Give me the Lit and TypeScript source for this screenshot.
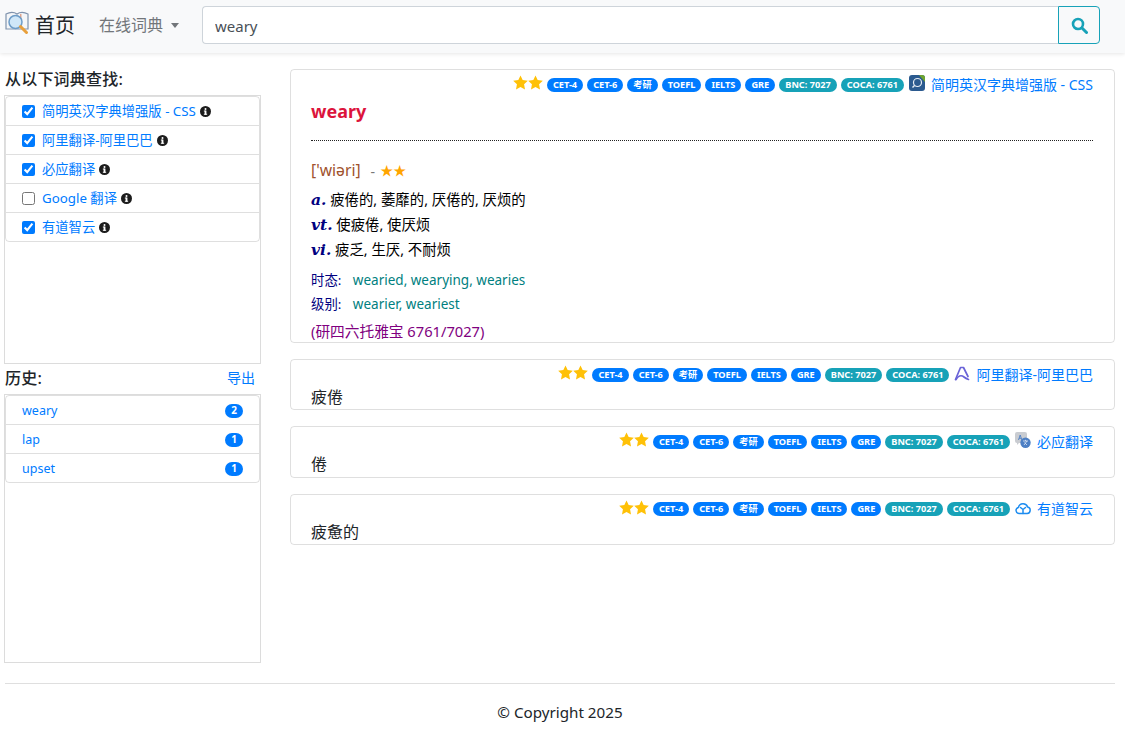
import { LitElement, html, css, svg } from "lit";
import { customElement } from "lit/decorators.js";

const TAGS = ["CET-4", "CET-6", "考研", "TOEFL", "IELTS", "GRE"];
const FREQ = ["BNC: 7027", "COCA: 6761"];

const DICTS = [
  { name: "简明英汉字典增强版 - CSS", checked: true },
  { name: "阿里翻译-阿里巴巴", checked: true },
  { name: "必应翻译", checked: true },
  { name: "Google 翻译", checked: false },
  { name: "有道智云", checked: true },
];

const HISTORY = [
  { word: "weary", count: 2 },
  { word: "lap", count: 1 },
  { word: "upset", count: 1 },
];

const star = svg`<path d="M8 .4l2.300 5 5.500.7-4 3.800 1 5.500L8 12.700l-4.800 2.700 1-5.500-4-3.800 5.500-.7z"/>`;

const logoIcon = html`<svg class="logo" viewBox="0 0 24 24">
  <path d="M1 3c4-2 8-2 11 0 3-2 7-2 11 0v15H1z" fill="#f4f6f8" stroke="#7f93ad" stroke-width="1.200"/>
  <path d="M12 3v15" stroke="#a9b4c2"/>
  <path d="M15 3h1.500v13H15z" fill="#e0a58e"/>
  <circle cx="10.500" cy="11" r="6.500" fill="#cfe7f8" stroke="#6d9cc7" stroke-width="1.500"/>
  <path d="M15.500 15.500l6 6" stroke="#e8a03c" stroke-width="3" stroke-linecap="round"/>
</svg>`;

const cssIcon = html`<svg class="src" viewBox="0 0 16 16">
  <rect width="16" height="16" rx="3" fill="#2b5a8f"/>
  <path d="M10 0h3a3 3 0 0 1 3 3v4z" fill="#6fa52e"/>
  <circle cx="8.500" cy="7.500" r="4" fill="none" stroke="#e8eef5" stroke-width="1.200"/>
  <path d="M5.500 10.500l-2 2" stroke="#e8eef5" stroke-width="1.400"/>
</svg>`;

const aliIcon = html`<svg class="src" viewBox="0 0 16 16" fill="none" stroke="#6a63d8" stroke-width="1.700" stroke-linejoin="round" stroke-linecap="round">
  <path d="M1.500 14.500L6.500 2.500h3l4.500 9"/>
  <path d="M2 14.500c2-3.500 5-5 8-2.500 1.500 1.300 3 2 4.500 2.500"/>
</svg>`;

const bingIcon = html`<svg class="src" viewBox="0 0 16 16">
  <path d="M2 0h8a2 2 0 0 1 2 2v7a2 2 0 0 1-2 2H4l-2 2v-2a2 2 0 0 1-2-2V2a2 2 0 0 1 2-2z" fill="#c9ccd1"/>
  <path d="M3.500 8l1.700-5 1.700 5M4.200 6.300h2" fill="none" stroke="#4d7fc4" stroke-width=".9"/>
  <circle cx="10.500" cy="10.800" r="5.200" fill="#4d7fc4"/>
  <path d="M8 9h5M10.500 7.800V9M9 13l3-4M12 13l-2.500-2.500" fill="none" stroke="#dfe8f5" stroke-width=".8"/>
</svg>`;

const cloudIcon = html`<svg class="src" viewBox="0 0 16 16" fill="none" stroke="#1d8cf0" stroke-width="1.500">
  <path d="M4 13.500a3.100 3.100 0 0 1-.6-6.100 4.800 4.800 0 0 1 9.200-.4 3.300 3.300 0 0 1-.4 6.500z" stroke-linejoin="round"/>
  <path d="M8 13.500V9.500M5.500 7.500L8 9.500l2.500-2" stroke-linecap="round" stroke-linejoin="round"/>
</svg>`;

function meta(name: string, icon: unknown) {
  return html`<div class="meta">
    <svg class="stars" viewBox="0 0 32 16" fill="#ffc107">${star}<g transform="translate(16 0)">${star}</g></svg>
    ${TAGS.map((t) => html`<span class="pill blue">${t}</span>`)}
    ${FREQ.map((t) => html`<span class="pill teal">${t}</span>`)}
    ${icon}
    <a class="src-name">${name}</a>
  </div>`;
}

@customElement("app-root")
export class AppRoot extends LitElement {
  static styles = css`
    :host {
      display: block;
      height: 734px;
      font-family: "Noto Sans", "Noto Sans CJK SC", sans-serif;
      font-size: 14px;
      line-height: 1.5;
      color: #212529;
      background: #fff;
      overflow: hidden;
    }
    * {
      box-sizing: border-box;
    }
    a {
      color: #007bff;
    }
    .nav {
      display: flex;
      align-items: center;
      height: 53px;
      padding: 6px 25px 9px 5px;
      background: #f8f9fa;
      box-shadow: 0 1px 4px rgba(0, 0, 0, 0.1);
    }
    .brand {
      display: flex;
      align-items: center;
      gap: 6px;
      width: 94px;
      padding-top: 2px;
      font-size: 20px;
    }
    .logo {
      flex: none;
      width: 24px;
      height: 24px;
      margin-top: -6px;
    }
    .menu {
      display: flex;
      align-items: center;
      width: 103px;
      font-size: 16px;
      color: #72767a;
    }
    .caret {
      width: 0;
      height: 0;
      margin-left: 8px;
      border-top: 5px solid #72767a;
      border-left: 4.500px solid transparent;
      border-right: 4.500px solid transparent;
    }
    .search {
      display: flex;
      flex: 1;
      height: 38px;
    }
    .search input {
      flex: 1;
      min-width: 0;
      height: 38px;
      padding: 2px 12px 0;
      font: inherit;
      font-size: 15px;
      color: #495057;
      border: 1px solid #ced4da;
      border-right: none;
      border-radius: 4px 0 0 4px;
      outline: none;
    }
    .search button {
      display: flex;
      align-items: center;
      justify-content: center;
      width: 42px;
      height: 38px;
      padding: 0;
      background: transparent;
      border: 1px solid #17a2b8;
      border-radius: 0 4px 4px 0;
    }
    .search svg {
      width: 17px;
      height: 17px;
    }
    .main {
      display: flex;
      gap: 29px;
      height: 610px;
      padding: 16px 10px 0 4px;
    }
    .side {
      display: flex;
      flex-direction: column;
      flex: none;
      width: 257px;
      margin-top: -2px;
    }
    .head {
      display: flex;
      align-items: center;
      justify-content: space-between;
      padding: 0 6px 0 1px;
      font-size: 16px;
      font-weight: 500;
      line-height: 24px;
      letter-spacing: 0.2px;
    }
    .head a {
      font-size: 14px;
      font-weight: 400;
      letter-spacing: 0;
    }
    .scroll {
      height: 269px;
      margin-top: 4px;
      border: 1px solid #dcdcdc;
    }
    .scroll.dicts {
      margin-bottom: 2px;
    }
    .list {
      border: 1px solid rgba(0, 0, 0, 0.125);
      border-radius: 4px;
      overflow: hidden;
    }
    .row {
      display: flex;
      align-items: center;
      height: 29px;
      padding: 1px 16px 0;
      font-size: 13.300px;
      border-top: 1px solid rgba(0, 0, 0, 0.125);
    }
    .row:first-child {
      height: 28px;
      border-top: none;
    }
    .row input {
      width: 13px;
      height: 13px;
      margin: 0 7px 0 0;
      accent-color: #007bff;
    }
    .info {
      width: 11px;
      height: 11px;
      margin-left: 4px;
    }
    .row.word {
      justify-content: space-between;
      font-size: 12.500px;
    }
    .row.word a {
      margin-top: 2px;
    }
    .count {
      display: flex;
      align-items: center;
      justify-content: center;
      width: 18px;
      height: 14px;
      border-radius: 7px;
      background: #007bff;
      color: #fff;
      font-size: 10px;
      font-weight: 700;
    }
    .results {
      display: flex;
      flex-direction: column;
      gap: 16px;
      flex: 1;
      min-width: 0;
    }
    .card {
      height: 51.300px;
      padding: 4px 21px 0 20px;
      border: 1px solid rgba(0, 0, 0, 0.125);
      border-radius: 4px;
    }
    .card.big {
      height: 274px;
    }
    .meta {
      display: flex;
      align-items: center;
      justify-content: flex-end;
      height: 20px;
    }
    .stars {
      width: 30px;
      height: 15px;
      margin-right: 4px;
      margin-top: -3px;
    }
    .pill {
      height: 14px;
      margin: 1px 4px 0 0;
      padding: 0 6px;
      border-radius: 7px;
      color: #fff;
      font-size: 9.200px;
      font-weight: 700;
      line-height: 14px;
    }
    .pill.blue {
      background: #007bff;
    }
    .pill.teal {
      background: #17a2b8;
    }
    .src {
      width: 16px;
      height: 16px;
      margin: -2px 6px 0 1px;
    }
    .src-name {
      font-size: 14px;
    }
    .body {
      margin-top: 2px;
      font-size: 16px;
      line-height: 22px;
    }
    .word-title {
      margin: 4px 0 15px;
      color: #dc143c;
      font-size: 18px;
      font-weight: 700;
      line-height: 27px;
    }
    hr.dot {
      margin: 0 0 17px;
      border: none;
      border-top: 1px dotted #222;
    }
    .phon {
      display: flex;
      align-items: center;
      height: 26px;
      font-size: 15.700px;
      color: #a0522d;
    }
    .phon .sep {
      margin-left: 10px;
      font-size: 14px;
      color: #777;
    }
    .phon .rank {
      margin-left: 5px;
      font-size: 13px;
      color: #ffa500;
    }
    .defs {
      margin-top: 3px;
    }
    .def {
      height: 25px;
      font-size: 14.400px;
      line-height: 25px;
      color: #000;
    }
    .def b {
      font-family: "DejaVu Serif", serif;
      font-style: italic;
      font-size: 15.500px;
      color: #000080;
    }
    .forms {
      margin-top: 6px;
      font-size: 13.400px;
      line-height: 24px;
      color: #000080;
    }
    .forms span {
      margin-left: 8px;
      font-size: 13.500px;
      color: #008080;
    }
    .rank-line {
      margin-top: 2px;
      font-size: 14.700px;
      line-height: 26px;
      color: #800080;
    }
    .foot {
      margin: 20px 10px 0 5px;
      padding-top: 17px;
      border-top: 1px solid #dfdfdf;
      text-align: center;
      font-size: 15.200px;
    }
  `;

  private infoIcon() {
    return html`<svg class="info" viewBox="0 0 12 12">
      <circle cx="6" cy="6" r="6" fill="#1c1c1c" />
      <rect x="5" y="5" width="2" height="4.500" fill="#fff" />
      <rect x="4.200" y="8.500" width="3.600" height="1" fill="#fff" />
      <rect x="4.200" y="5" width="2" height="1" fill="#fff" />
      <circle cx="6" cy="3.200" r="1.100" fill="#fff" />
    </svg>`;
  }

  render() {
    return html`
      <nav class="nav">
        <div class="brand">${logoIcon}<span>首页</span></div>
        <div class="menu">在线词典<span class="caret"></span></div>
        <div class="search">
          <input type="text" .value=${"weary"} />
          <button>
            <svg viewBox="0 0 17 17" fill="none" stroke="#17a2b8">
              <circle cx="7" cy="7" r="5" stroke-width="2.600" />
              <path d="M11 11l4.500 4.500" stroke-width="3" stroke-linecap="round" />
            </svg>
          </button>
        </div>
      </nav>
      <div class="main">
        <aside class="side">
          <div class="head">从以下词典查找:</div>
          <div class="scroll dicts">
            <div class="list">
              ${DICTS.map(
                (d) => html`<label class="row">
                  <input type="checkbox" .checked=${d.checked} />
                  <a>${d.name}</a>${this.infoIcon()}
                </label>`
              )}
            </div>
          </div>
          <div class="head"><span>历史:</span><a>导出</a></div>
          <div class="scroll">
            <div class="list">
              ${HISTORY.map(
                (h) => html`<div class="row word">
                  <a>${h.word}</a><span class="count">${h.count}</span>
                </div>`
              )}
            </div>
          </div>
        </aside>
        <section class="results">
          <div class="card big">
            ${meta("简明英汉字典增强版 - CSS", cssIcon)}
            <div class="word-title">weary</div>
            <hr class="dot" />
            <div class="phon">
              ['wiəri]<span class="sep">-</span><span class="rank">★★</span>
            </div>
            <div class="defs">
              <div class="def"><b>a.</b> 疲倦的, 萎靡的, 厌倦的, 厌烦的</div>
              <div class="def"><b>vt.</b> 使疲倦, 使厌烦</div>
              <div class="def"><b>vi.</b> 疲乏, 生厌, 不耐烦</div>
            </div>
            <div class="forms">
              <div>时态: <span>wearied, wearying, wearies</span></div>
              <div>级别: <span>wearier, weariest</span></div>
            </div>
            <div class="rank-line">(研四六托雅宝 6761/7027)</div>
          </div>
          <div class="card">
            ${meta("阿里翻译-阿里巴巴", aliIcon)}
            <div class="body">疲倦</div>
          </div>
          <div class="card">
            ${meta("必应翻译", bingIcon)}
            <div class="body">倦</div>
          </div>
          <div class="card">
            ${meta("有道智云", cloudIcon)}
            <div class="body">疲惫的</div>
          </div>
        </section>
      </div>
      <footer class="foot">© Copyright 2025</footer>
    `;
  }
}
